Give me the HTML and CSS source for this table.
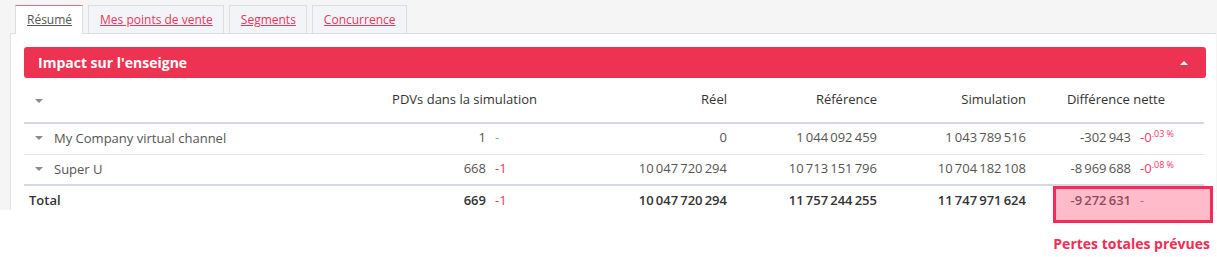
FILE: index.html
```html
<!DOCTYPE html>
<html lang="fr">
<head>
<meta charset="utf-8">
<title>Impact sur l'enseigne</title>
<link rel="stylesheet" href="styles.css">
</head>
<body>
<div class="stage">
  <div class="shot">
    <div class="tabs">
      <a class="tab active">Résumé</a>
      <a class="tab">Mes points de vente</a>
      <a class="tab">Segments</a>
      <a class="tab">Concurrence</a>
    </div>
    <div class="panel">
      <div class="bar">
        <span class="bar-title">Impact sur l'enseigne</span>
        <span class="caret-up"></span>
      </div>
      <table class="grid">
        <colgroup>
          <col class="c-name"><col class="c-pdv"><col class="c-reel"><col class="c-ref"><col class="c-sim"><col class="c-diff">
        </colgroup>
        <thead>
          <tr>
            <th class="name"><span class="caret"></span></th>
            <th>PDVs dans la simulation</th>
            <th>Réel</th>
            <th>Référence</th>
            <th>Simulation</th>
            <th class="diff">Différence nette</th>
          </tr>
        </thead>
        <tbody>
          <tr class="sep">
            <td class="name"><span class="caret"></span><span class="label">My Company virtual channel</span></td>
            <td>1<span class="delta pos">-</span></td>
            <td>0</td>
            <td>1&#8201;044&#8201;092&#8201;459</td>
            <td>1&#8201;043&#8201;789&#8201;516</td>
            <td class="diff">-302&#8201;943<span class="delta d2 neg">-0<sup>.03 %</sup></span></td>
          </tr>
          <tr class="sep2">
            <td class="name"><span class="caret"></span><span class="label">Super U</span></td>
            <td>668<span class="delta neg">-1</span></td>
            <td>10&#8201;047&#8201;720&#8201;294</td>
            <td>10&#8201;713&#8201;151&#8201;796</td>
            <td>10&#8201;704&#8201;182&#8201;108</td>
            <td class="diff">-8&#8201;969&#8201;688<span class="delta d2 neg">-0<sup>.08 %</sup></span></td>
          </tr>
          <tr class="total">
            <td class="name total-label">Total</td>
            <td>669<span class="delta neg">-1</span></td>
            <td>10&#8201;047&#8201;720&#8201;294</td>
            <td>11&#8201;757&#8201;244&#8201;255</td>
            <td>11&#8201;747&#8201;971&#8201;624</td>
            <td class="diff">-9&#8201;272&#8201;631<span class="delta d2 pos-dark">-</span></td>
          </tr>
        </tbody>
      </table>
    </div>
  </div>
  <div class="highlight"></div>
  <div class="note">Pertes totales prévues</div>
</div>
</body>
</html>
```

FILE: styles.css
```css
* { box-sizing: border-box; }
html, body { margin: 0; padding: 0; background: #ffffff; }
body {
  font-family: "Open Sans", "Liberation Sans", sans-serif;
  font-size: 13px;
  color: #555;
}
.stage { position: relative; width: 1217px; height: 257px; }
.shot {
  height: 210px;
  overflow: hidden;
  background: #f5f5f5;
  padding: 5px 1px 0 10px;
}
.tabs {
  display: flex;
  gap: 5px;
  padding-left: 5px;
  height: 28px;
  position: relative;
  z-index: 1;
}
.tab {
  display: flex;
  align-items: center;
  height: 28px;
  padding: 0 10px 0 11px;
  font-size: 12px;
  color: #e8375a;
  text-decoration: underline;
  background: #f3f4f7;
  border: 1px solid #d9dde4;
  border-bottom: none;
}
.tab.active {
  background: #fff;
  color: #555;
  border-color: #dedede;
  border-top-color: #ec6a83;
  height: 29px;
  padding-bottom: 1px;
}
.panel {
  background: #fff;
  border-top: 1px solid #dcdfe4;
  border-left: 1px solid #e2e2e2;
  padding: 13px 10px 0 13px;
  height: 200px;
}
.bar {
  display: flex;
  align-items: center;
  justify-content: space-between;
  height: 31px;
  padding: 0 18px 0 14px;
  background: #ee3352;
  border-radius: 3px;
  color: #fff;
  font-size: 14px;
  font-weight: 700;
}
.caret-up {
  width: 0; height: 0;
  border-left: 4px solid transparent;
  border-right: 4px solid transparent;
  border-bottom: 4px solid #fff;
}
.grid {
  width: 1180px;
  table-layout: fixed;
  border-collapse: separate;
  border-spacing: 0;
}
.c-name { width: 363px; }
.c-pdv { width: 160px; }
.c-reel { width: 190px; }
.c-ref { width: 150px; }
.c-sim { width: 149px; }
.c-diff { width: 168px; }
.grid th, .grid td {
  padding: 0 10px 0 0;
  text-align: right;
  white-space: nowrap;
  vertical-align: middle;
}
.grid th {
  height: 46px;
  padding-bottom: 2px;
  font-weight: 400;
  color: #333;
  border-bottom: 2px solid #d3d9e2;
}
.grid td { height: 31px; padding-bottom: 4px; }
.grid .diff { padding-right: 39px; }
.grid .name { text-align: left; padding-left: 11px; }
.sep td { border-bottom: 1px solid #e6e6e6; }
.sep2 td { border-bottom: 2px solid #d3d9e2; padding-bottom: 3px; }
.total td { font-weight: 600; color: #333; height: 28px; padding-bottom: 0; }
.grid .total-label { padding-left: 5px; }
.caret {
  display: inline-block;
  vertical-align: middle;
  width: 0; height: 0;
  border-left: 4px solid transparent;
  border-right: 4px solid transparent;
  border-top: 4px solid #8a8a8a;
}
.label { margin-left: 11px; vertical-align: middle; }
.delta {
  display: inline-block;
  width: 51px;
  padding-left: 9px;
  text-align: left;
}
.delta.d2 { width: 34px; }
.neg { color: #f0366a; }
.pos { color: #6cc06c; }
.pos-dark { color: #5f8a3c; }
.total .neg, .total .pos, .total .pos-dark { font-weight: 400; }
sup { font-size: 9px; vertical-align: 5px; line-height: 0; }
.highlight {
  position: absolute;
  left: 1053px;
  top: 186px;
  width: 160px;
  height: 37px;
  background: rgba(255, 105, 135, 0.45);
  border: 3px solid #f7295a;
}
.note {
  text-align: right;
  padding: 24px 7px 0 0;
  font-size: 14px;
  font-weight: 700;
  color: #f22d55;
}
```
